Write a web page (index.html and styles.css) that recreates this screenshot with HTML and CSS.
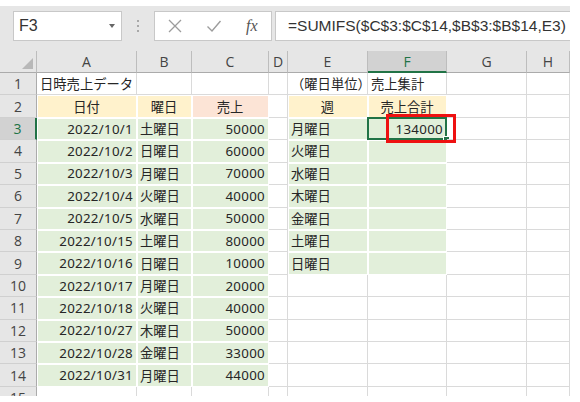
FILE: index.html
```html
<!DOCTYPE html>
<html lang="ja">
<head>
<meta charset="utf-8">
<link rel="stylesheet" href="styles.css">
</head>
<body>
<div class="app">
  <div class="toolbar">
    <div class="namebox"><span class="ref">F3</span><span class="caret"></span></div>
    <div class="dots"><i></i><i></i><i></i></div>
    <div class="btns">
      <svg class="ico" width="14" height="14" viewBox="0 0 14 14"><path d="M1 1L13 13M13 1L1 13" stroke="#9c9c9c" stroke-width="1.3" fill="none"/></svg>
      <svg class="ico" width="16" height="14" viewBox="0 0 16 14"><path d="M1.5 7.5L6 12L14.5 2" stroke="#9c9c9c" stroke-width="1.4" fill="none"/></svg>
      <span class="fx">fx</span>
    </div>
    <div class="formula">=SUMIFS($C$3:$C$14,$B$3:$B$14,E3)</div>
  </div>
  <div class="sheet">
    <div class="corner"><span class="tri"></span></div>
    <div class="ch">A</div><div class="ch">B</div><div class="ch">C</div><div class="ch">D</div><div class="ch">E</div><div class="ch on">F</div><div class="ch">G</div><div class="ch">H</div>

    <div class="rh">1</div>
    <div class="c l">日時売上データ</div><div class="c"></div><div class="c"></div><div class="c"></div><div class="c l">（曜日単位）</div><div class="c l">売上集計</div><div class="c"></div><div class="c"></div>

    <div class="rh">2</div>
    <div class="c f y m">日付</div><div class="c f y m">曜日</div><div class="c f s m">売上</div><div class="c"></div><div class="c f y m">週</div><div class="c f y m">売上合計</div><div class="c"></div><div class="c"></div>

    <div class="rh on">3</div>
    <div class="c f g r">2022/10/1</div><div class="c f g l">土曜日</div><div class="c f g r">50000</div><div class="c"></div><div class="c f g l">月曜日</div><div class="c f g r sel">134000</div><div class="c"></div><div class="c"></div>

    <div class="rh">4</div>
    <div class="c f g r">2022/10/2</div><div class="c f g l">日曜日</div><div class="c f g r">60000</div><div class="c"></div><div class="c f g l">火曜日</div><div class="c f g"></div><div class="c"></div><div class="c"></div>

    <div class="rh">5</div>
    <div class="c f g r">2022/10/3</div><div class="c f g l">月曜日</div><div class="c f g r">70000</div><div class="c"></div><div class="c f g l">水曜日</div><div class="c f g"></div><div class="c"></div><div class="c"></div>

    <div class="rh">6</div>
    <div class="c f g r">2022/10/4</div><div class="c f g l">火曜日</div><div class="c f g r">40000</div><div class="c"></div><div class="c f g l">木曜日</div><div class="c f g"></div><div class="c"></div><div class="c"></div>

    <div class="rh">7</div>
    <div class="c f g r">2022/10/5</div><div class="c f g l">水曜日</div><div class="c f g r">50000</div><div class="c"></div><div class="c f g l">金曜日</div><div class="c f g"></div><div class="c"></div><div class="c"></div>

    <div class="rh">8</div>
    <div class="c f g r">2022/10/15</div><div class="c f g l">土曜日</div><div class="c f g r">80000</div><div class="c"></div><div class="c f g l">土曜日</div><div class="c f g"></div><div class="c"></div><div class="c"></div>

    <div class="rh">9</div>
    <div class="c f g r">2022/10/16</div><div class="c f g l">日曜日</div><div class="c f g r">10000</div><div class="c"></div><div class="c f g l">日曜日</div><div class="c f g"></div><div class="c"></div><div class="c"></div>

    <div class="rh">10</div>
    <div class="c f g r">2022/10/17</div><div class="c f g l">月曜日</div><div class="c f g r">20000</div><div class="c"></div><div class="c"></div><div class="c"></div><div class="c"></div><div class="c"></div>

    <div class="rh">11</div>
    <div class="c f g r">2022/10/18</div><div class="c f g l">火曜日</div><div class="c f g r">40000</div><div class="c"></div><div class="c"></div><div class="c"></div><div class="c"></div><div class="c"></div>

    <div class="rh">12</div>
    <div class="c f g r">2022/10/27</div><div class="c f g l">木曜日</div><div class="c f g r">50000</div><div class="c"></div><div class="c"></div><div class="c"></div><div class="c"></div><div class="c"></div>

    <div class="rh">13</div>
    <div class="c f g r">2022/10/28</div><div class="c f g l">金曜日</div><div class="c f g r">33000</div><div class="c"></div><div class="c"></div><div class="c"></div><div class="c"></div><div class="c"></div>

    <div class="rh">14</div>
    <div class="c f g r">2022/10/31</div><div class="c f g l">月曜日</div><div class="c f g r">44000</div><div class="c"></div><div class="c"></div><div class="c"></div><div class="c"></div><div class="c"></div>

    <div class="rh">15</div>
    <div class="c"></div><div class="c"></div><div class="c"></div><div class="c"></div><div class="c"></div><div class="c"></div><div class="c"></div><div class="c"></div>

    <div class="mark"></div>
  </div>
</div>
</body>
</html>
```
FILE: styles.css
```css
html, body {
  margin: 0;
  padding: 0;
  background: #ffffff;
}
.app {
  width: 570px;
  height: 390px;
  margin-top: 6px;
  background: #e6e6e6;
  overflow: hidden;
}
.toolbar {
  height: 45px;
  display: flex;
  align-items: flex-start;
  padding-top: 5px;
  box-sizing: border-box;
}
.namebox {
  margin-left: 13px;
  width: 109px;
  height: 30px;
  box-sizing: border-box;
  background: #fff;
  border: 1px solid #c8c8c8;
  display: flex;
  align-items: center;
  justify-content: space-between;
  padding: 0 6px 0 5px;
}
.ref {
  font-family: "Liberation Sans", Arial, sans-serif;
  font-size: 16px;
  color: #333;
}
.caret {
  width: 0;
  height: 0;
  border-left: 3.5px solid transparent;
  border-right: 3.5px solid transparent;
  border-top: 4px solid #666;
}
.dots {
  width: 32px;
  height: 30px;
  display: flex;
  flex-direction: column;
  align-items: center;
  justify-content: center;
  gap: 3px;
}
.dots i {
  display: block;
  width: 2px;
  height: 2px;
  background: #a8a8a8;
}
.btns {
  width: 118px;
  height: 30px;
  box-sizing: border-box;
  background: #fff;
  border: 1px solid #c8c8c8;
  display: flex;
  align-items: center;
  padding-left: 13px;
  gap: 24px;
}
.fx {
  font-family: "Liberation Serif", "Times New Roman", serif;
  font-style: italic;
  font-size: 16px;
  color: #555;
}
.formula {
  margin-left: 3px;
  flex: 1;
  height: 30px;
  box-sizing: border-box;
  background: #fff;
  border: 1px solid #c8c8c8;
  border-right: none;
  padding-left: 12px;
  font-family: "Liberation Sans", Arial, sans-serif;
  font-size: 15.5px;
  color: #333;
  line-height: 28px;
  white-space: nowrap;
  overflow: hidden;
}
.sheet {
  position: relative;
  display: grid;
  grid-template-columns: 37px 100px 55px 77px 19px 80px 79px 80px 43px;
  grid-template-rows: 22px repeat(15, 22.43px);
  background: #fff;
}
.corner {
  background: #e6e6e6;
  border-right: 1px solid #bdbdbd;
  border-bottom: 1px solid #ababab;
  position: relative;
}
.tri {
  position: absolute;
  right: 3px;
  bottom: 3px;
  width: 0;
  height: 0;
  border-left: 11px solid transparent;
  border-bottom: 11px solid #b8b8b8;
}
.ch {
  background: #e6e6e6;
  border-right: 1px solid #bdbdbd;
  border-bottom: 1px solid #ababab;
  font-family: "Open Sans", "Liberation Sans", sans-serif;
  font-size: 14px;
  color: #444;
  display: flex;
  align-items: center;
  justify-content: center;
}
.ch.on {
  background: #d2d2d2;
  color: #217346;
  border-bottom: 2px solid #217346;
}
.rh {
  background: #e6e6e6;
  border-right: 1px solid #ababab;
  border-bottom: 1px solid #d0d0d0;
  font-family: "Open Sans", "Liberation Sans", sans-serif;
  font-size: 14px;
  color: #444;
  display: flex;
  align-items: center;
  justify-content: center;
}
.rh.on {
  background: #d2d2d2;
  color: #217346;
  border-right: 2px solid #217346;
}
.c {
  border-right: 1px solid #dadada;
  border-bottom: 1px solid #dadada;
  font-family: "Noto Sans", "Noto Sans CJK JP", sans-serif;
  font-size: 13.3px;
  color: #262626;
  display: flex;
  align-items: center;
  white-space: nowrap;
  min-width: 0;
  position: relative;
}
.c.l { justify-content: flex-start; padding-left: 3px; }
.c.r { justify-content: flex-end; padding-right: 3px; letter-spacing: 0.3px; }
.c.m { justify-content: center; }
.c.f {
  border-right-color: #fff;
  border-bottom-color: #fff;
  box-shadow: inset 1px 1px 0 #fff;
}
.c.g { background: #e2efda; }
.c.y { background: #fff2cc; }
.c.s { background: #fce4d6; }
.sel::before {
  content: "";
  position: absolute;
  left: -1px;
  top: -1px;
  right: -1px;
  bottom: -1px;
  border: 2px solid #217346;
}
.sel::after {
  content: "";
  position: absolute;
  right: -4px;
  bottom: -4px;
  width: 5px;
  height: 5px;
  background: #217346;
  border: 1px solid #fff;
}
.mark {
  position: absolute;
  left: 386px;
  top: 63px;
  width: 70px;
  height: 29px;
  box-sizing: border-box;
  border: 3px solid #ee1111;
}
```
